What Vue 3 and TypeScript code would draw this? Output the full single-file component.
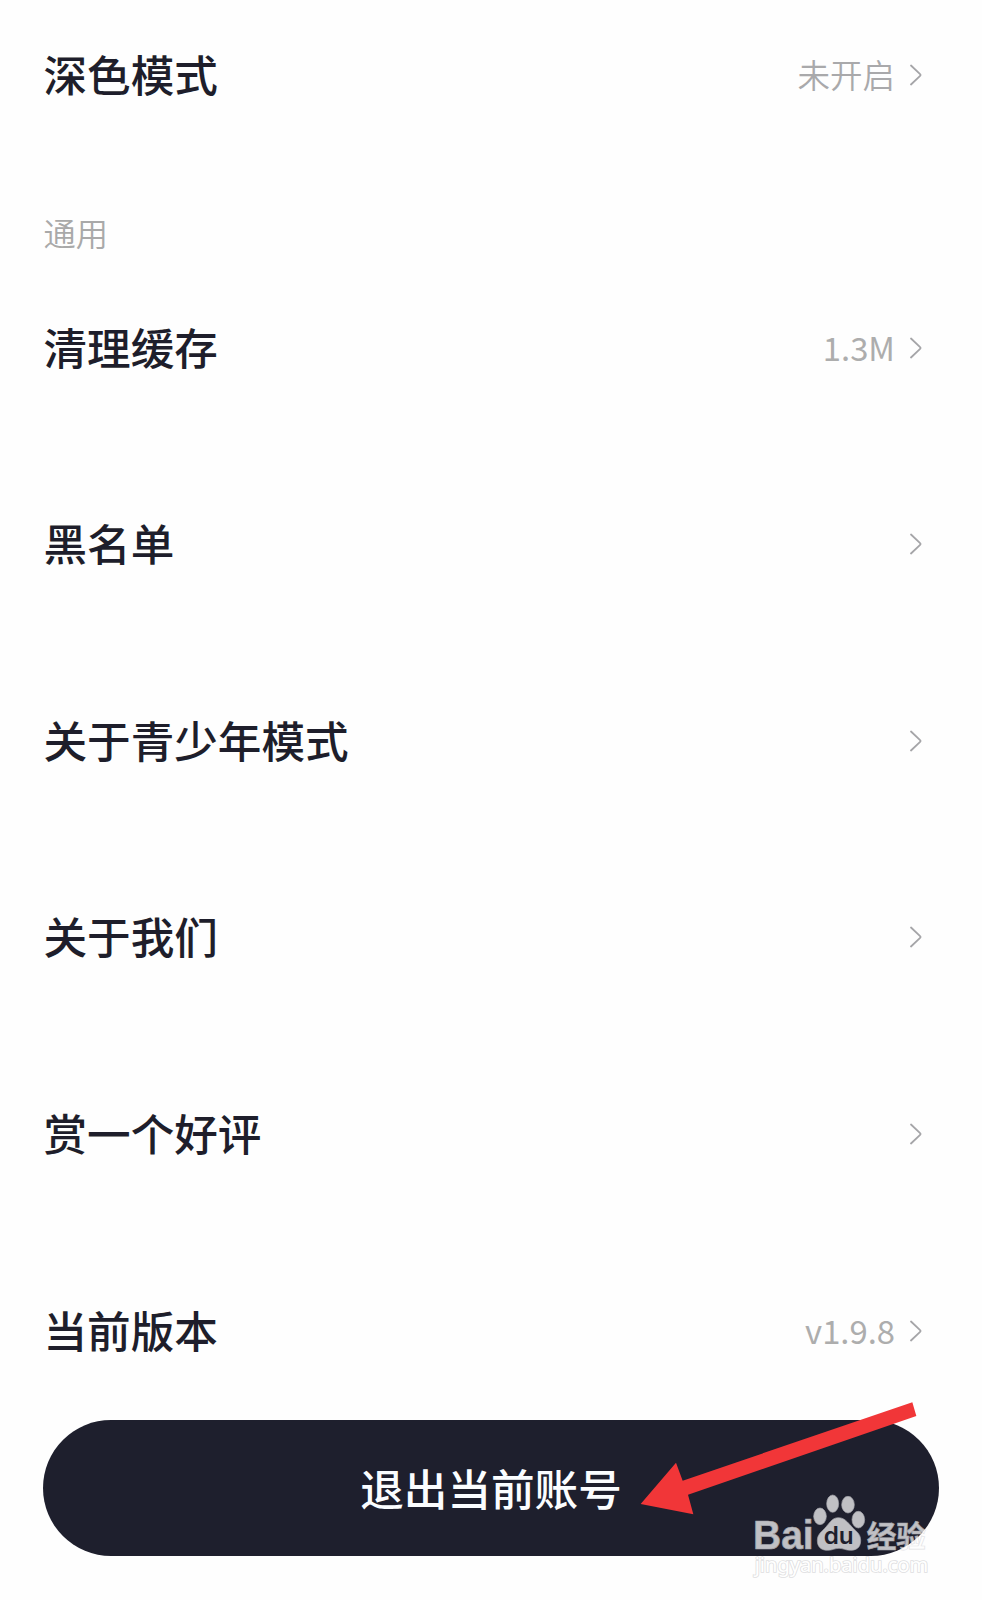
<script setup lang="ts">
interface SettingItem {
  label: string
  value?: string
}

const displayItems: SettingItem[] = [{ label: '深色模式', value: '未开启' }]

const generalItems: SettingItem[] = [
  { label: '清理缓存', value: '1.3M' },
  { label: '黑名单' },
  { label: '关于青少年模式' },
  { label: '关于我们' },
  { label: '赏一个好评' },
  { label: '当前版本', value: 'v1.9.8' },
]
</script>

<template>
  <main class="page">
    <section class="group display">
      <div v-for="item in displayItems" :key="item.label" class="row">
        <span class="label">{{ item.label }}</span>
        <span class="value">{{ item.value }}</span>
        <svg class="chevron" viewBox="0 0 12 22"><path d="M1 1.5 L10.1 10.2 Q11 11 10.1 11.8 L1 20.5" /></svg>
      </div>
    </section>
    <h2 class="heading">通用</h2>
    <section class="group general">
      <div v-for="item in generalItems" :key="item.label" class="row">
        <span class="label">{{ item.label }}</span>
        <span class="value">{{ item.value }}</span>
        <svg class="chevron" viewBox="0 0 12 22"><path d="M1 1.5 L10.1 10.2 Q11 11 10.1 11.8 L1 20.5" /></svg>
      </div>
    </section>
    <button class="logout" type="button">退出当前账号</button>

    <svg class="arrow" viewBox="0 0 1020 450">
      <polygon points="62,372 168,248 188,302 877,67 889,108 204,344 220,403" />
    </svg>

    <svg class="watermark" viewBox="0 0 750 390">
      <g class="mark">
        <text class="latin" x="99" y="236" textLength="182" lengthAdjust="spacingAndGlyphs">Bai</text>
        <ellipse cx="300" cy="139" rx="19" ry="25" />
        <ellipse cx="338" cy="101" rx="18" ry="26" />
        <ellipse cx="384" cy="104" rx="19" ry="25" />
        <ellipse cx="415" cy="149" rx="19" ry="25" />
        <path d="M355 143 C377 143 386 162 401 176 C414 188 422 195 422 212 C422 233 408 241 391 241 C377 241 370 235 357 235 C344 235 337 241 323 241 C304 241 292 231 292 212 C292 195 301 188 313 176 C328 162 334 143 355 143 Z" />
        <text class="cjk" x="440" y="230" textLength="178" lengthAdjust="spacingAndGlyphs">经验</text>
      </g>
      <text class="du" x="311" y="223" textLength="90" lengthAdjust="spacingAndGlyphs">du</text>
      <text class="site" x="104" y="306" textLength="521" lengthAdjust="spacingAndGlyphs">jingyan.baidu.com</text>
    </svg>
  </main>
</template>

<style>
body {
  margin: 0;
  background: #fefefe;
}
</style>

<style scoped>
.page {
  position: relative;
  box-sizing: border-box;
  width: 982px;
  height: 1600px;
  padding: 0 43px;
  overflow: hidden;
  background: #fefefe;
  font-family: 'Noto Sans CJK SC', sans-serif;
}
.row {
  display: flex;
  align-items: center;
  height: 196.6px;
  padding-right: 17px;
}
.display .row {
  height: 149px;
}
.label {
  flex: 1;
  padding: 0 0 4px 0.5px;
  color: #1e1e2b;
  font-size: 43.6px;
  font-weight: 500;
  line-height: 60px;
}
.value {
  margin-right: 15px;
  padding-bottom: 1px;
  color: #a9a9ab;
  font-size: 32.5px;
  font-weight: 350;
  line-height: 48px;
}
.general .value {
  padding-bottom: 2px;
  font-size: 32.8px;
  font-weight: 400;
  color: #adadad;
}
.chevron {
  width: 12px;
  height: 22px;
  fill: none;
  stroke: #a5a5a8;
  stroke-width: 1.8;
  stroke-linecap: round;
}
.heading {
  box-sizing: border-box;
  height: 100.4px;
  margin: 0;
  padding: 59px 0 0 0.5px;
  color: #a9a9a9;
  font-size: 32.3px;
  font-weight: 350;
  line-height: 48px;
}
.general {
  height: 1170.6px;
}
.logout {
  display: block;
  width: 896px;
  height: 136px;
  padding: 0 0 2px;
  border: 0;
  border-radius: 68px;
  background: #1e1f2d;
  color: #fbfdff;
  font-family: inherit;
  font-size: 43.6px;
  font-weight: 500;
  line-height: 134px;
}
.arrow {
  position: absolute;
  left: 620px;
  top: 1380px;
  width: 340px;
  height: 150px;
  fill: #f13638;
}
.watermark {
  position: absolute;
  left: 720px;
  top: 1470px;
  width: 250px;
  height: 130px;
}
.mark {
  fill: #fff;
  stroke: #d8d8dc;
  stroke-width: 2;
  opacity: 0.72;
}
.latin {
  font: 700 120px 'Liberation Sans', sans-serif;
}
.cjk {
  font: 700 90px 'Noto Sans CJK SC', sans-serif;
}
.du {
  fill: #1e1f2d;
  font: 600 72px Inter, sans-serif;
}
.site {
  fill: #fff;
  stroke: #dfdfe1;
  stroke-width: 5;
  paint-order: stroke;
  font: 400 58px 'Noto Sans', sans-serif;
}
</style>
